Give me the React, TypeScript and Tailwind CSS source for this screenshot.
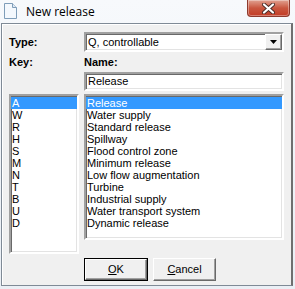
const keys = ["A", "W", "R", "H", "S", "M", "N", "T", "B", "U", "D"];
const names = [
  "Release",
  "Water supply",
  "Standard release",
  "Spillway",
  "Flood control zone",
  "Minimum release",
  "Low flow augmentation",
  "Turbine",
  "Industrial supply",
  "Water transport system",
  "Dynamic release",
];

const sunken =
  "border-2 border-t-[#a0a0a0] border-l-[#a0a0a0] border-b-white border-r-white shadow-[inset_1px_1px_0_#696969,inset_-1px_-1px_0_#e3e3e3]";
const raised =
  "border border-t-white border-l-white border-b-[#696969] border-r-[#696969] shadow-[inset_-1px_-1px_0_#a0a0a0,inset_1px_1px_0_#f0f0f0]";

function DocIcon() {
  return (
    <svg width="13" height="16" viewBox="0 0 13 16">
      <path d="M0.5 0.5 H8.5 L12.5 4.5 V15.5 H0.5 Z" fill="#f4f8fd" stroke="#7f9db9" />
      <path d="M8.5 0.5 V4.5 H12.5" fill="#dfe9f5" stroke="#7f9db9" />
    </svg>
  );
}

export default function App() {
  return (
    <div className="w-[295px] h-[289px] bg-gradient-to-b from-[#f7f9fc] to-[#eaeff5] font-['Liberation_Sans',Arial,sans-serif] text-[11px] text-black leading-none overflow-hidden">
      <div className="flex h-[23px] items-start">
        <div className="pl-[4px] pt-[3px]">
          <DocIcon />
        </div>
        <span className="pl-[9px] pt-[6px] text-[12px] font-['Open_Sans',sans-serif] text-[#000]">New release</span>
        <div className="ml-auto mr-[5px] flex h-[17px] w-[43px] items-center justify-center rounded-b-[4px] border border-t-0 border-[#8d3a2e] bg-gradient-to-b from-[#e0a191] via-[#c9563f] to-[#c23b25] shadow-[inset_0_0_0_1px_rgba(255,255,255,0.35)]">
          <svg width="13" height="11" viewBox="0 0 13 11">
            <path d="M2 1.5 L11 9.5 M11 1.5 L2 9.5" stroke="#4a2b27" strokeWidth="4" strokeLinecap="round" />
            <path d="M2 1.5 L11 9.5 M11 1.5 L2 9.5" stroke="#ffffff" strokeWidth="2.2" strokeLinecap="round" />
          </svg>
        </div>
      </div>

      <div className="ml-[1px] w-[292px] h-[263px] border border-[#7f8a96] border-r-2 border-r-[#6f6f6f] bg-[#f0f0f0] shadow-[inset_1px_1px_0_#ffffff]">
        <div className="grid grid-cols-[70px_200px] gap-x-[5px] pl-[7px] pt-[8px]">
          <div className="flex h-[20px] items-center font-bold">Type:</div>
          <div className={`flex h-[20px] items-center bg-white ${sunken}`}>
            <span className="pl-[2px]">Q, controllable</span>
            <div className={`ml-auto flex h-[16px] w-[17px] items-center justify-center bg-[#f0f0f0] ${raised}`}>
              <svg width="7" height="4" viewBox="0 0 7 4">
                <path d="M0 0 H7 L3.5 4 Z" fill="#000" />
              </svg>
            </div>
          </div>

          <div className="flex h-[20px] items-center font-bold">Key:</div>
          <div className="flex h-[20px] items-center font-bold">Name:</div>

          <div />
          <div className={`flex h-[19px] items-center bg-white ${sunken}`}>
            <span className="pl-[2px]">Release</span>
          </div>

          <div className={`mt-[3px] h-[160px] bg-white ${sunken}`}>
            <div className="flex flex-col pt-[1px]">
              {keys.map((k, i) => (
                <div
                  key={k}
                  className={`flex h-[12px] items-center pl-[1px] ${i === 0 ? "bg-[#3399ff] text-white" : ""}`}
                >
                  {k}
                </div>
              ))}
            </div>
          </div>

          <div className="mt-[3px] flex flex-col">
            <div className={`h-[146px] bg-white ${sunken}`}>
              <div className="flex flex-col pt-[1px]">
                {names.map((n, i) => (
                  <div
                    key={n}
                    className={`flex h-[12px] items-center pl-[1px] ${i === 0 ? "bg-[#3399ff] text-white" : ""}`}
                  >
                    {n}
                  </div>
                ))}
              </div>
            </div>
            <div className="mt-[18px] flex gap-[5px]">
              <div className="h-[23px] w-[64px] border border-[#000] bg-[#f0f0f0]">
                <div className={`flex h-full w-full items-center justify-center ${raised}`}>
                  <span><u>O</u>K</span>
                </div>
              </div>
              <div className={`flex h-[23px] w-[63px] items-center justify-center bg-[#f0f0f0] ${raised}`}>
                <span><u>C</u>ancel</span>
              </div>
            </div>
          </div>
        </div>
      </div>
    </div>
  );
}
